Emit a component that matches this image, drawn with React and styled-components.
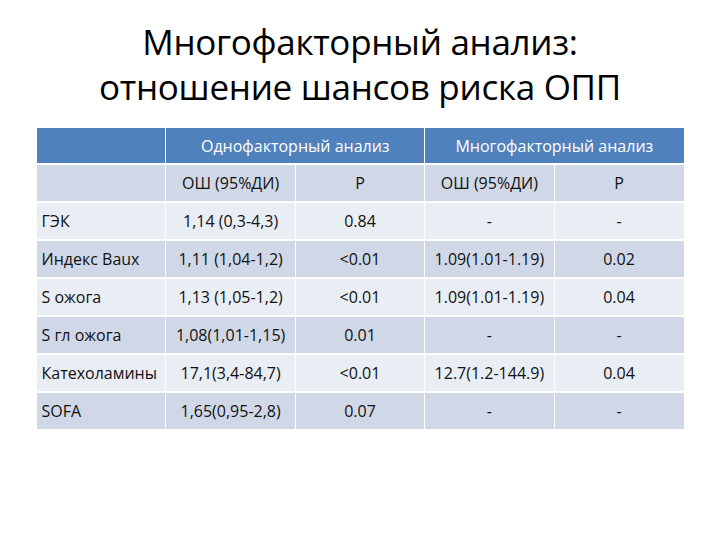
import React from "react";
import styled, { createGlobalStyle } from "styled-components";

const Global = createGlobalStyle`
  html, body { margin: 0; padding: 0; background: #ffffff; }
  body { font-family: "Open Sans", "Noto Sans", sans-serif; color: #000; }
`;

const Slide = styled.div`
  width: 720px;
  height: 540px;
  box-sizing: border-box;
  padding-top: 19px;
  display: flex;
  flex-direction: column;
  align-items: center;
  overflow: hidden;
`;

const Title = styled.h1`
  margin: 0;
  font-family: "Open Sans", "Noto Sans", sans-serif;
  font-weight: 400;
  font-size: 35px;
  line-height: 45px;
  text-align: center;
  color: #000;
  letter-spacing: -0.3px;
`;

const Table = styled.table`
  margin-top: 19px;
  width: 647px;
  border-collapse: collapse;
  table-layout: fixed;
  font-family: "Open Sans", "Noto Sans", sans-serif;
  font-size: 16px;
`;

const HeadCell = styled.th`
  height: 35px;
  padding: 0;
  background: #4f81bd;
  color: #ffffff;
  font-weight: 400;
  text-align: center;
  border-right: 1px solid #ffffff;
  border-bottom: 2px solid #ffffff;
  &:last-child { border-right: none; }
`;

const Cell = styled.td`
  height: 36px;
  padding: 0 ${(p) => (p.$left ? "5px" : "0")};
  background: ${(p) => (p.$dark ? "#d0d8e8" : "#e9edf4")};
  color: #111;
  text-align: ${(p) => (p.$left ? "left" : "center")};
  white-space: nowrap;
  border-right: 1px solid #ffffff;
  border-bottom: 2px solid #ffffff;
  &:last-child { border-right: none; }
`;

const rows = [
  ["ГЭК", "1,14 (0,3-4,3)", "0.84", "-", "-"],
  ["Индекс Baux", "1,11 (1,04-1,2)", "<0.01", "1.09(1.01-1.19)", "0.02"],
  ["S ожога", "1,13 (1,05-1,2)", "<0.01", "1.09(1.01-1.19)", "0.04"],
  ["S гл ожога", "1,08(1,01-1,15)", "0.01", "-", "-"],
  ["Катехоламины", "17,1(3,4-84,7)", "<0.01", "12.7(1.2-144.9)", "0.04"],
  ["SOFA", "1,65(0,95-2,8)", "0.07", "-", "-"],
];

export default function App() {
  return (
    <>
      <Global />
      <Slide>
        <Title>
          Многофакторный анализ:
          <br />
          отношение шансов риска ОПП
        </Title>
        <Table>
          <thead>
            <tr>
              <HeadCell />
              <HeadCell colSpan={2}>Однофакторный анализ</HeadCell>
              <HeadCell colSpan={2}>Многофакторный анализ</HeadCell>
            </tr>
          </thead>
          <tbody>
            <tr>
              <Cell $dark />
              <Cell $dark>ОШ (95%ДИ)</Cell>
              <Cell $dark>P</Cell>
              <Cell $dark>ОШ (95%ДИ)</Cell>
              <Cell $dark>P</Cell>
            </tr>
            {rows.map((r, i) => (
              <tr key={r[0]}>
                {r.map((v, j) => (
                  <Cell key={j} $dark={i % 2 === 1} $left={j === 0}>
                    {v}
                  </Cell>
                ))}
              </tr>
            ))}
          </tbody>
        </Table>
      </Slide>
    </>
  );
}
